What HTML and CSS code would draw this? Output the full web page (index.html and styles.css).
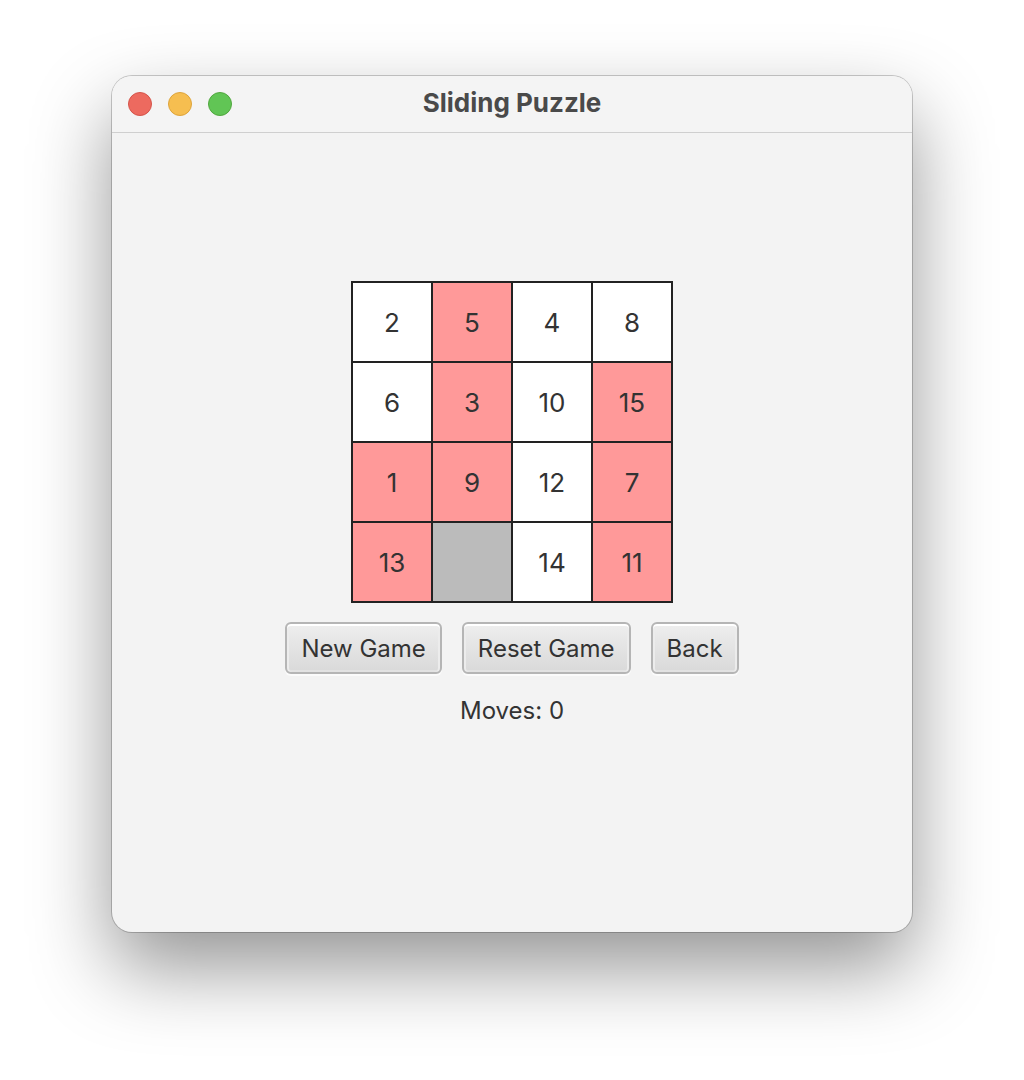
FILE: index.html
```html
<!DOCTYPE html>
<html lang="en">
<head>
<meta charset="utf-8">
<meta name="viewport" content="width=device-width, initial-scale=1">
<title>Sliding Puzzle</title>
<link rel="stylesheet" href="styles.css">
</head>
<body>
<div class="window">
  <header class="titlebar">
    <div class="lights">
      <button class="light close" type="button" aria-label="Close"></button>
      <button class="light minimize" type="button" aria-label="Minimize"></button>
      <button class="light expand" type="button" aria-label="Zoom"></button>
    </div>
    <h1 class="title">Sliding Puzzle</h1>
  </header>
  <main class="game">
    <div class="board">
      <button class="tile" type="button">2</button>
      <button class="tile red" type="button">5</button>
      <button class="tile" type="button">4</button>
      <button class="tile" type="button">8</button>
      <button class="tile" type="button">6</button>
      <button class="tile red" type="button">3</button>
      <button class="tile" type="button">10</button>
      <button class="tile red" type="button">15</button>
      <button class="tile red" type="button">1</button>
      <button class="tile red" type="button">9</button>
      <button class="tile" type="button">12</button>
      <button class="tile red" type="button">7</button>
      <button class="tile red" type="button">13</button>
      <button class="tile empty" type="button" aria-label="Empty"></button>
      <button class="tile" type="button">14</button>
      <button class="tile red" type="button">11</button>
    </div>
    <div class="actions">
      <button class="action" type="button">New Game</button>
      <button class="action" type="button">Reset Game</button>
      <button class="action" type="button">Back</button>
    </div>
    <p class="moves">Moves: 0</p>
  </main>
</div>
</body>
</html>
```
FILE: styles.css
```css
* {
  box-sizing: border-box;
}

body {
  margin: 0;
  min-height: 100vh;
  padding: 76px 112px 148px;
  display: flex;
  background: #fff;
  color: #333;
  font-family: Inter, "Liberation Sans", sans-serif;
  font-size: 24px;
}

button {
  font: inherit;
  color: inherit;
}

.window {
  flex: 1;
  display: flex;
  flex-direction: column;
  border-radius: 20px;
  background: #f3f3f3;
  box-shadow: 0 0 0 1px rgba(0, 0, 0, 0.2), 0 36px 80px rgba(0, 0, 0, 0.42);
}

.titlebar {
  display: grid;
  grid-template-columns: 1fr auto 1fr;
  align-items: center;
  height: 57px;
  padding: 0 16px;
  border-bottom: 1px solid #cfcfcf;
  border-radius: 20px 20px 0 0;
  background: #f4f4f4;
}

.lights {
  display: flex;
  gap: 16px;
}

.light {
  width: 24px;
  height: 24px;
  padding: 0;
  border: 1px solid;
  border-radius: 50%;
}

.close {
  border-color: #d5544a;
  background: #ed6a5f;
}

.minimize {
  border-color: #dea43b;
  background: #f6be50;
}

.expand {
  border-color: #51a73e;
  background: #61c555;
}

.title {
  margin: 0;
  padding-bottom: 2px;
  color: #4a4a4a;
  font-size: 26px;
  font-weight: 700;
  line-height: 32px;
}

.game {
  flex: 1;
  display: flex;
  flex-direction: column;
  align-items: center;
  justify-content: center;
  gap: 20px;
  padding-bottom: 56px;
}

.board {
  display: grid;
  grid-template-columns: repeat(4, 80px);
  grid-auto-rows: 80px;
  margin-bottom: -1px;
  border: 1px solid #222;
  font-size: 26px;
}

.tile {
  padding: 0;
  border: 1px solid #222;
  background: #fff;
}

.red {
  background: #ff9999;
}

.empty {
  background: #bbb;
}

.actions {
  display: flex;
  gap: 20px;
}

.action {
  height: 52px;
  padding: 0 14px;
  border: 2px solid #b5b5b5;
  border-radius: 6px;
  background: linear-gradient(#eee, #d9d9d9) padding-box;
  box-shadow: inset 0 2px #fff, inset 2px 0 #ececec, inset -2px 0 #ececec, inset 0 -2px #e2e2e2, 0 2px #fbfbfb;
}

.moves {
  margin: 0;
  line-height: 34px;
}
```
